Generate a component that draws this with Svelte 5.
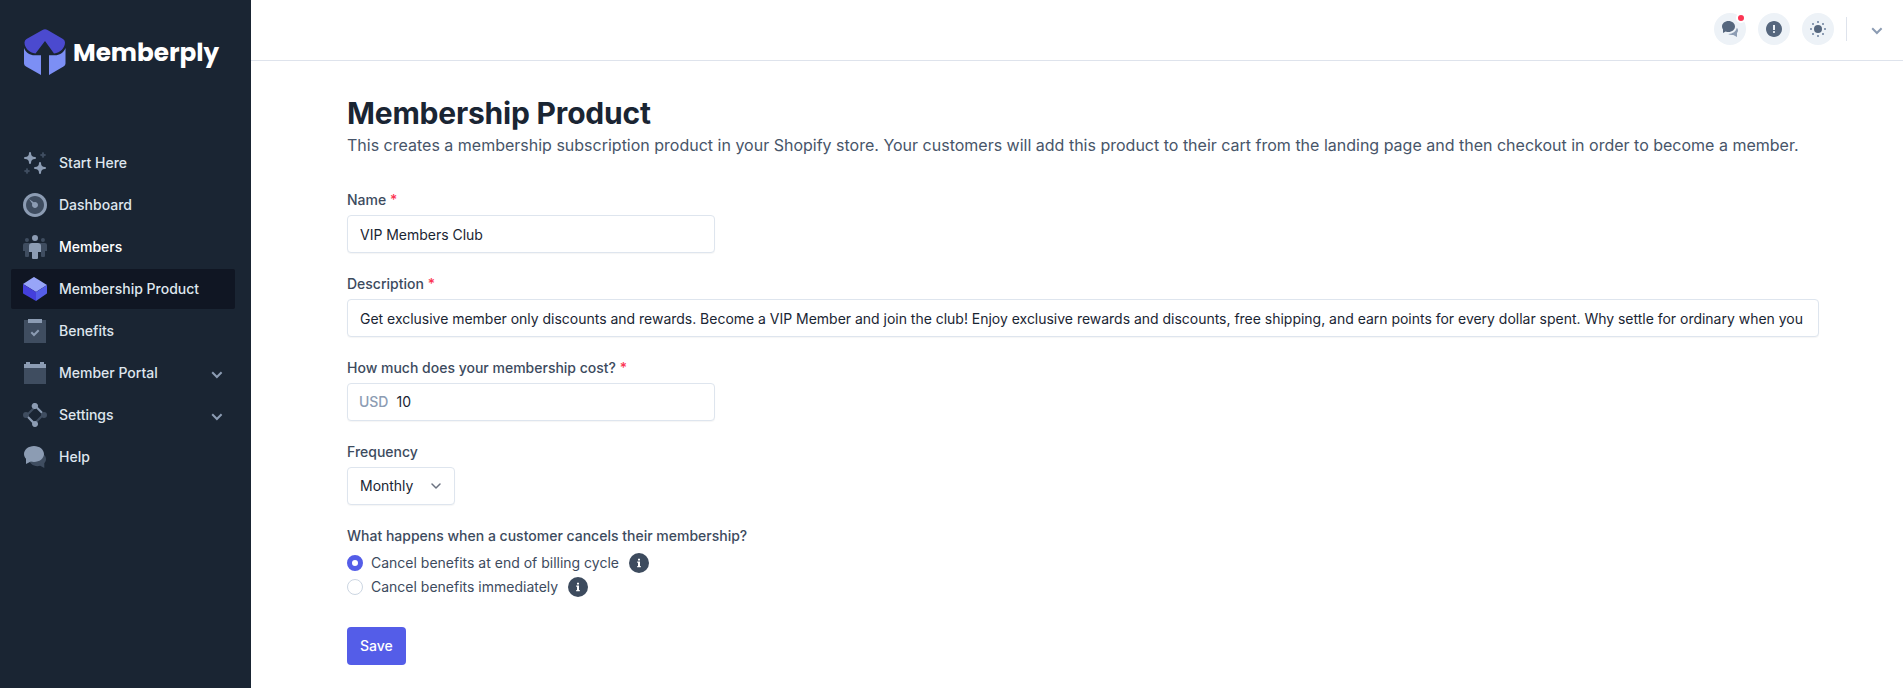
<script>
  let name = 'VIP Members Club';
  let description =
    'Get exclusive member only discounts and rewards. Become a VIP Member and join the club! Enjoy exclusive rewards and discounts, free shipping, and earn points for every dollar spent. Why settle for ordinary when you';
  let cost = '10';
  let frequency = 'Monthly';
  let cancelMode = 'end';
  let current = 'Membership Product';

  const chevron = 'M5.9 11.4L.5 6l1.4-1.4 4 4 4-4L11.3 6z';

  const nav = [
    {
      label: 'Start Here',
      paths: [
        ['dim', 'M20 7a.75.75 0 01-.75-.75 1.5 1.5 0 00-1.5-1.5.75.75 0 110-1.5 1.5 1.5 0 001.5-1.5.75.75 0 111.5 0 1.5 1.5 0 001.5 1.5.75.75 0 110 1.5 1.5 1.5 0 00-1.5 1.5A.75.75 0 0120 7zM4 23a.75.75 0 01-.75-.75 1.5 1.5 0 00-1.5-1.5.75.75 0 110-1.5 1.5 1.5 0 001.5-1.5.75.75 0 111.5 0 1.5 1.5 0 001.5 1.5.75.75 0 110 1.5 1.5 1.5 0 00-1.5 1.5A.75.75 0 014 23z'],
        ['light', 'M17 23a1 1 0 01-1-1 4 4 0 00-4-4 1 1 0 010-2 4 4 0 004-4 1 1 0 012 0 4 4 0 004 4 1 1 0 010 2 4 4 0 00-4 4 1 1 0 01-1 1zM7 13a1 1 0 01-1-1 4 4 0 00-4-4 1 1 0 110-2 4 4 0 004-4 1 1 0 112 0 4 4 0 004 4 1 1 0 010 2 4 4 0 00-4 4 1 1 0 01-1 1z'],
      ],
    },
    {
      label: 'Dashboard',
      paths: [
        ['light', 'M12 0C5.383 0 0 5.383 0 12s5.383 12 12 12 12-5.383 12-12S18.617 0 12 0z'],
        ['dim', 'M12 3c-4.963 0-9 4.037-9 9s4.037 9 9 9 9-4.037 9-9-4.037-9-9-9z'],
        ['light', 'M12 15c-1.654 0-3-1.346-3-3 0-.462.113-.894.3-1.285L6 6l4.714 3.301A2.973 2.973 0 0112 9c1.654 0 3 1.346 3 3s-1.346 3-3 3z'],
      ],
    },
    {
      label: 'Members',
      bright: true,
      paths: [
        ['dim', 'M18.974 8H22a2 2 0 012 2v6h-2v5a1 1 0 01-1 1h-2a1 1 0 01-1-1v-5h-2v-6a2 2 0 012-2h.974zM20 7a2 2 0 11-.001-3.999A2 2 0 0120 7zM2.974 8H6a2 2 0 012 2v6H6v5a1 1 0 01-1 1H3a1 1 0 01-1-1v-5H0v-6a2 2 0 012-2h.974zM4 7a2 2 0 11-.001-3.999A2 2 0 014 7z'],
        ['light', 'M12 6a3 3 0 110-6 3 3 0 010 6zm2 18h-4a1 1 0 01-1-1v-6H6v-6a3 3 0 013-3h6a3 3 0 013 3v6h-3v6a1 1 0 01-1 1z'],
      ],
    },
    {
      label: 'Membership Product',
      paths: [
        ['box-top', 'M13 15l11-7L11.504.136a1 1 0 00-1.019.007L0 7l13 8z'],
        ['box-left', 'M13 15L0 7v9c0 .355.189.685.496.864L13 24v-9z'],
        ['box-right', 'M13 15.047V24l10.573-7.181A.999.999 0 0024 16V8l-11 7.047z'],
      ],
    },
    {
      label: 'Benefits',
      paths: [
        ['dim', 'M1 1h22v23H1z'],
        ['light', 'M15 10.586L16.414 12 11 17.414 7.586 14 9 12.586l2 2zM5 0h14v4H5z'],
      ],
    },
    {
      label: 'Member Portal',
      expandable: true,
      paths: [
        ['dim', 'M1 3h22v20H1z'],
        ['light', 'M21 3h2v4H1V3h2V1h4v2h10V1h4v2z'],
      ],
    },
    {
      label: 'Settings',
      expandable: true,
      paths: [
        ['dim', 'M11.3 19.3l8-8 1.4 1.4-8 8zM3 9a3 3 0 110 6 3 3 0 010-6zM21 9a3 3 0 110 6 3 3 0 010-6zM3.3 11.3l8-8 1.4 1.4-8 8z'],
        ['light', 'M12 0a3 3 0 012.8 4.1l4.9 4.9-1.4 1.4-5-4.9A3 3 0 1112 0zM5.7 13.3l5 5A3 3 0 119.2 20l-4.9-5.3z'],
      ],
    },
    {
      label: 'Help',
      paths: [
        ['dim', 'M14.5 7c4.695 0 8.5 3.184 8.5 7.111 0 1.597-.638 3.067-1.7 4.253V23l-4.108-2.148a10 10 0 01-2.692.37c-4.695 0-8.5-3.184-8.5-7.11C6 10.183 9.805 7 14.5 7z'],
        ['light', 'M11 1C5.477 1 1 4.582 1 9c0 1.797.75 3.45 2 4.785V19l4.833-2.416C8.829 16.85 9.892 17 11 17c5.523 0 10-3.582 10-8s-4.477-8-10-8z'],
      ],
    },
  ];

  const cancelOptions = [
    { id: 'end', label: 'Cancel benefits at end of billing cycle' },
    { id: 'now', label: 'Cancel benefits immediately' },
  ];
</script>

<div class="layout">
  <aside>
    <div class="logo">
      <svg width="42" height="46" viewBox="0 0 42 46">
        <path fill="#4b4acf" d="M18.5 1q2.5-1.5 5 0L39 10q2 1.2 2 3.5c0 5-4.5 10.500-11 11L21 12l-9.500 12.500C5 24 .5 18.500.5 13.500Q.5 11.200 2.500 10z" />
        <path fill="#7c8ff5" d="M0 19c2 5 6.500 7.500 11 7.300h6V46L2 37.500q-2-1.200-2-3zM41.500 19c-2 5-6.500 7.500-11 7.300h-5.500V46l14.500-8.500q2-1.200 2-3z" />
      </svg>
      <span>Memberply</span>
    </div>
    <nav>
      {#each nav as item (item.label)}
        <button class="nav-item" class:active={item.label === current} class:bright={item.bright} on:click={() => (current = item.label)}>
          <svg width="24" height="24" viewBox="0 0 24 24">
            {#each item.paths as [tone, d]}
              <path class={tone} {d} />
            {/each}
          </svg>
          <span>{item.label}</span>
          {#if item.expandable}
            <svg class="caret" width="12" height="12" viewBox="0 0 12 12"><path class="light" d={chevron} /></svg>
          {/if}
        </button>
      {/each}
    </nav>
  </aside>

  <div class="content">
    <header>
      <button class="round" aria-label="Messages">
        <svg width="16" height="16" viewBox="0 0 16 16">
          <path class="icon-dark" d="M6.5 0C2.91 0 0 2.462 0 5.5c0 1.075.37 2.074 1 2.922V12l2.699-1.542A7.454 7.454 0 006.5 11c3.59 0 6.5-2.462 6.5-5.5S10.09 0 6.5 0z" />
          <path class="light" d="M16 9.5c0-.987-.429-1.897-1.147-2.639C14.124 10.348 10.66 13 6.5 13c-.103 0-.202-.018-.305-.021C7.231 13.617 8.556 14 10 14c.449 0 .886-.04 1.307-.11L15 16v-4h-.012C15.627 11.285 16 10.425 16 9.5z" />
        </svg>
        <i class="dot"></i>
      </button>
      <button class="round" aria-label="Notices">
        <svg width="16" height="16" viewBox="0 0 16 16">
          <path class="icon-dark" d="M8 0C3.6 0 0 3.6 0 8s3.6 8 8 8 8-3.6 8-8-3.6-8-8-8zm0 12c-.6 0-1-.4-1-1s.4-1 1-1 1 .4 1 1-.4 1-1 1zm1-3H7V4h2v5z" />
        </svg>
      </button>
      <button class="round" aria-label="Theme">
        <svg width="16" height="16" viewBox="0 0 16 16">
          <circle class="icon-dark" cx="8" cy="8" r="4" />
          <path class="light" d="M7 0h2v2H7zM7 14h2v2H7zM0 7h2v2H0zM14 7h2v2h-2zM2 2h2v2H2zM12 2h2v2h-2zM2 12h2v2H2zM12 12h2v2h-2z" />
        </svg>
      </button>
      <hr />
      <svg class="user-caret" width="12" height="12" viewBox="0 0 12 12"><path class="light" d={chevron} /></svg>
    </header>

    <main>
      <h1>Membership Product</h1>
      <p class="intro">
        This creates a membership subscription product in your Shopify store. Your customers will add this product to their cart from the landing page and then checkout in order to become a member.
      </p>

      <form on:submit|preventDefault>
        <div class="field">
          <label for="name">Name <em>*</em></label>
          <input id="name" class="control short" type="text" bind:value={name} />
        </div>
        <div class="field">
          <label for="description">Description <em>*</em></label>
          <input id="description" class="control" type="text" bind:value={description} />
        </div>
        <div class="field">
          <label for="cost">How much does your membership cost? <em>*</em></label>
          <div class="control short money">
            <span>USD</span>
            <input id="cost" type="text" bind:value={cost} />
          </div>
        </div>
        <div class="field">
          <label for="frequency">Frequency</label>
          <button id="frequency" type="button" class="control select">
            {frequency}
            <svg width="20" height="20" viewBox="0 0 20 20"><path d="M6 8l4 4 4-4" /></svg>
          </button>
        </div>
        <div class="field">
          <span class="label">What happens when a customer cancels their membership?</span>
          {#each cancelOptions as option (option.id)}
            <label class="option">
              <input type="radio" bind:group={cancelMode} value={option.id} />
              <span>{option.label}</span>
              <svg width="20" height="20" viewBox="0 0 20 20">
                <circle cx="10" cy="10" r="10" fill="#3d4b5e" />
                <path fill="#fff" d="M9 5.8h2v1.7H9zM8.2 8.5H11V13h.8v1.2H8.2V13H9V9.700h-.8z" />
              </svg>
            </label>
          {/each}
        </div>
        <button class="save" type="submit">Save</button>
      </form>
    </main>
  </div>
</div>

<style>
  :global(body) {
    background: #fff;
    font-family: Inter, sans-serif;
    font-size: 14px;
    line-height: 22px;
    color: #1a2533;
  }
  button,
  input {
    font: inherit;
    color: inherit;
    border: 0;
    padding: 0;
    background: none;
    box-sizing: border-box;
  }
  svg {
    flex: none;
    display: block;
  }
  .layout {
    display: flex;
    height: 688px;
    overflow: hidden;
  }
  aside {
    flex: none;
    width: 251px;
    box-sizing: border-box;
    padding: 29px 16px 0 11px;
    background: #1a2533;
  }
  .logo {
    display: flex;
    align-items: center;
    gap: 7px;
    height: 46px;
    margin: 0 0 68px 13px;
    color: #fff;
    font-family: Poppins, Inter, sans-serif;
    font-size: 24.7px;
    font-weight: 700;
  }
  .logo span {
    padding-top: 1px;
  }
  nav {
    display: flex;
    flex-direction: column;
    gap: 2px;
  }
  .nav-item {
    display: flex;
    align-items: center;
    gap: 12px;
    height: 40px;
    padding: 0 12px;
    border-radius: 2px;
    font-weight: 500;
    color: #dfe6ee;
    text-align: left;
    cursor: pointer;
  }
  .active {
    background: #101623;
  }
  .bright {
    color: #fff;
  }
  .caret {
    margin-left: auto;
  }
  .light {
    fill: #8c9cb3;
  }
  .dim {
    fill: #3f4d60;
  }
  .box-top {
    fill: #98a5f8;
  }
  .box-left {
    fill: #443fdc;
  }
  .box-right {
    fill: #545de8;
  }
  .icon-dark {
    fill: #56677e;
  }
  .content {
    flex: 1;
    min-width: 0;
  }
  header {
    display: flex;
    align-items: center;
    justify-content: flex-end;
    gap: 12px;
    height: 61px;
    padding: 0 20px 2px 0;
    box-sizing: border-box;
    border-bottom: 1px solid #dee3ec;
  }
  .round {
    position: relative;
    display: flex;
    align-items: center;
    justify-content: center;
    width: 32px;
    height: 32px;
    border-radius: 50%;
    background: #edf2f7;
  }
  .dot {
    position: absolute;
    top: 0;
    right: 0;
    width: 6px;
    height: 6px;
    border: 2px solid #fff;
    border-radius: 50%;
    background: #fb3553;
  }
  hr {
    width: 1px;
    height: 24px;
    margin: 0;
    border: 0;
    background: #dee3ec;
  }
  .user-caret {
    margin-left: 12px;
  }
  main {
    padding: 32px 84px 0 96px;
  }
  h1 {
    margin: 0;
    font-size: 30px;
    line-height: 40px;
    font-weight: 700;
    letter-spacing: -0.2px;
  }
  .intro {
    margin: 0 0 32px;
    font-size: 16px;
    line-height: 24px;
    color: #475569;
    white-space: nowrap;
  }
  .field {
    margin-bottom: 20px;
  }
  .field > label,
  .label {
    display: block;
    margin-bottom: 4px;
    font-weight: 500;
    color: #3d4b5e;
  }
  em {
    font-style: normal;
    color: #fb3553;
  }
  .control {
    display: block;
    width: 100%;
    height: 38px;
    padding: 0 12px;
    box-sizing: border-box;
    border: 1px solid #dee5ee;
    border-radius: 4px;
    background: #fff;
    box-shadow: 0 1px 1px rgba(16, 22, 35, 0.04);
    letter-spacing: -0.017px;
  }
  .short {
    width: 368px;
  }
  .money {
    display: flex;
    align-items: center;
    gap: 8px;
    padding-left: 11px;
  }
  .money span {
    font-weight: 500;
    color: #8c9cb3;
  }
  .select {
    display: flex;
    align-items: center;
    justify-content: space-between;
    width: 108px;
    padding-right: 8px;
  }
  .select path {
    fill: none;
    stroke: #6b7280;
    stroke-width: 1.5;
    stroke-linecap: round;
    stroke-linejoin: round;
  }
  .field > .option {
    display: flex;
    align-items: center;
    height: 24px;
    margin: 0;
    font-weight: 400;
  }
  .option input {
    appearance: none;
    width: 16px;
    height: 16px;
    margin: 0 8px 0 0;
    border: 1px solid #ccd6e2;
    border-radius: 50%;
  }
  .option input:checked {
    border: 5px solid #545de8;
  }
  .option svg {
    margin-left: 10px;
  }
  .save {
    height: 38px;
    margin-top: 8px;
    padding: 0 13px;
    border-radius: 4px;
    background: #545de8;
    color: #fff;
    font-weight: 500;
  }
</style>
